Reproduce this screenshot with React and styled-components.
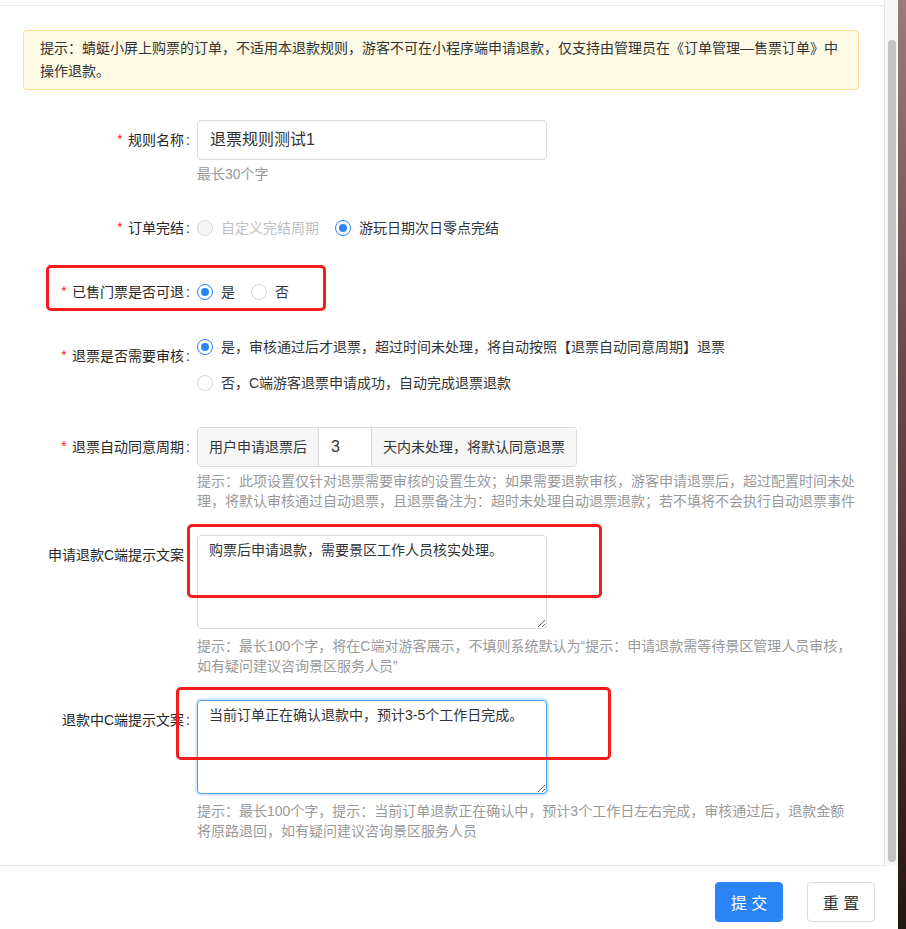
import React from 'react';
import styled, { createGlobalStyle, css } from 'styled-components';

const BLUE = '#2a84f6';

const GlobalStyle = createGlobalStyle`
  html, body {
    margin: 0;
    padding: 0;
    background: #ffffff;
  }
  body {
    font-family: "Liberation Sans", "Noto Sans CJK SC", sans-serif;
    font-size: 14px;
    color: #333333;
  }
  * {
    box-sizing: border-box;
  }
`;

const Page = styled.div`
  position: relative;
  display: flex;
  flex-direction: row;
  width: 906px;
  height: 929px;
  overflow: hidden;
`;

const Modal = styled.div`
  display: flex;
  flex-direction: column;
  width: 898px;
  height: 929px;
  background: #ffffff;
`;

const Wallpaper = styled.div`
  flex: 1;
  background: linear-gradient(180deg, #9a7c7e 0%, #6e4e4c 35%, #4a302c 70%, #241614 100%);
`;

const ScrollArea = styled.div`
  display: flex;
  flex-direction: row;
  height: 866px;
`;

const Content = styled.div`
  width: 884px;
  height: 866px;
  overflow: hidden;
  border-bottom: 1px solid #e6e6e6;
`;

const TopEdge = styled.div`
  height: 6px;
  border-bottom: 1px solid #e8e8e8;
`;

const Scrollbar = styled.div`
  width: 14px;
  background: #f7f7f7;
  border-left: 1px solid #e6e6e6;
  padding: 40px 0 4px 3px;
`;

const Thumb = styled.div`
  width: 8px;
  height: 822px;
  border-radius: 4px;
  background: #c2c2c2;
`;

const Body = styled.div`
  padding: 24px 25px 0 23px;
`;

const Alert = styled.div`
  padding: 6px 16px;
  border: 1px solid #f8e28e;
  border-radius: 4px;
  background: #fcfae4;
  color: #333333;
  font-size: 14px;
  line-height: 23px;
  margin-bottom: 30px;
`;

const FormItem = styled.div`
  display: grid;
  grid-template-columns: 174px 1fr;
  margin-bottom: 24px;
`;

const Label = styled.label`
  display: block;
  text-align: right;
  line-height: 40px;
  height: 40px;
  white-space: nowrap;
  color: #262626;
  font-size: 14px;

  &::after {
    content: ':';
    margin: 0 7px 0 2px;
  }
`;

const Required = styled.span`
  color: #f5222d;
  margin-right: 4px;
  font-family: "Liberation Mono", monospace;
  font-size: 14px;
`;

const Control = styled.div`
  display: flex;
  flex-direction: column;
  min-height: 40px;
`;

const TextInput = styled.div`
  width: 350px;
  height: 40px;
  padding: 0 12px;
  border: 1px solid #d9d9d9;
  border-radius: 4px;
  font-size: 16px;
  line-height: 38px;
  color: #333333;
`;

const Help = styled.div`
  margin-top: ${(p) => (p.$wide ? 7 : 4)}px;
  line-height: 20px;
  font-size: 14px;
  color: #999999;
`;

const RadioRow = styled.div`
  display: flex;
  align-items: center;
  height: 40px;
`;

const RadioStack = styled.div`
  display: flex;
  flex-direction: column;
  gap: 14px;
  padding-bottom: 9px;
`;

const RadioWrap = styled.span`
  display: inline-flex;
  align-items: center;
  height: 22px;
  margin-right: 8px;
  line-height: 22px;
  color: ${(p) => (p.$disabled ? '#c0c0c0' : '#333333')};
`;

const Circle = styled.span`
  position: relative;
  display: inline-block;
  width: 16px;
  height: 16px;
  border-radius: 50%;
  border: 1px solid #d9d9d9;
  background: #ffffff;
  flex-shrink: 0;

  ${(p) =>
    p.$checked &&
    css`
      border-color: ${BLUE};
      &::after {
        content: '';
        position: absolute;
        left: 3px;
        top: 3px;
        width: 8px;
        height: 8px;
        border-radius: 50%;
        background: ${BLUE};
      }
    `}

  ${(p) =>
    p.$disabled &&
    css`
      background: #f5f5f5;
      border-color: #d9d9d9;
    `}
`;

const RadioText = styled.span`
  padding: 0 8px;
  white-space: nowrap;
`;

const InputGroup = styled.div`
  display: flex;
  height: 40px;
  align-self: flex-start;
  border: 1px solid #d9d9d9;
  border-radius: 4px;
  overflow: hidden;
  line-height: 38px;
  color: #333333;
`;

const Addon = styled.span`
  padding: 0 11px;
  background: #f6f6f6;
  white-space: nowrap;
  & + & {
    border-left: 1px solid #d9d9d9;
  }
`;

const GroupInput = styled.span`
  width: 54px;
  padding: 0 12px;
  border-left: 1px solid #d9d9d9;
  border-right: 1px solid #d9d9d9;
  background: #ffffff;
  font-size: 16px;
`;

const TextArea = styled.textarea`
  display: block;
  width: 350px;
  height: 94px;
  margin: 0;
  padding: 3px 11px;
  border: 1px solid ${(p) => (p.$focused ? '#4d9ef8' : '#d9d9d9')};
  border-radius: 4px;
  font-family: inherit;
  font-size: 14px;
  line-height: 22px;
  color: #333333;
  resize: vertical;
  outline: none;
  box-shadow: ${(p) => (p.$focused ? '0 0 0 2px rgba(42, 132, 246, 0.18)' : 'none')};
`;

const Footer = styled.div`
  display: flex;
  justify-content: flex-end;
  gap: 24px;
  padding: 16px 23px 0 0;
  flex: 1;
`;

const Button = styled.button`
  width: 68px;
  height: 40px;
  border-radius: 4px;
  font-family: inherit;
  font-size: 16px;
  white-space: pre;
  padding: 0;
  cursor: pointer;
  border: 1px solid ${(p) => (p.$primary ? BLUE : '#d9d9d9')};
  background: ${(p) => (p.$primary ? BLUE : '#ffffff')};
  color: ${(p) => (p.$primary ? '#ffffff' : '#333333')};
`;

const Annotation = styled.div`
  position: absolute;
  left: ${(p) => p.$x}px;
  top: ${(p) => p.$y}px;
  width: ${(p) => p.$w}px;
  height: ${(p) => p.$h}px;
  border: 3px solid #f41c1c;
  border-radius: 5px;
  pointer-events: none;
`;

const Radio = ({ checked, disabled, children }) => (
  <RadioWrap $disabled={disabled}>
    <Circle $checked={checked} $disabled={disabled} />
    <RadioText>{children}</RadioText>
  </RadioWrap>
);

const Field = ({ label, required, children }) => (
  <FormItem>
    <Label>
      {required && <Required>*</Required>}
      {label}
    </Label>
    <Control>{children}</Control>
  </FormItem>
);

export default function App() {
  return (
    <>
      <GlobalStyle />
      <Page>
        <Modal>
          <ScrollArea>
            <Content>
              <TopEdge />
              <Body>
                <Alert>
                  提示：蜻蜓小屏上购票的订单，不适用本退款规则，游客不可在小程序端申请退款，仅支持由管理员在《订单管理—售票订单》中操作退款。
                </Alert>

                <Field label="规则名称" required>
                  <TextInput>退票规则测试1</TextInput>
                  <Help>最长30个字</Help>
                </Field>

                <Field label="订单完结" required>
                  <RadioRow>
                    <Radio disabled>自定义完结周期</Radio>
                    <Radio checked>游玩日期次日零点完结</Radio>
                  </RadioRow>
                </Field>

                <Field label="已售门票是否可退" required>
                  <RadioRow>
                    <Radio checked>是</Radio>
                    <Radio>否</Radio>
                  </RadioRow>
                </Field>

                <Field label="退票是否需要审核" required>
                  <RadioStack>
                    <Radio checked>是，审核通过后才退票，超过时间未处理，将自动按照【退票自动同意周期】退票</Radio>
                    <Radio>否，C端游客退票申请成功，自动完成退票退款</Radio>
                  </RadioStack>
                </Field>

                <Field label="退票自动同意周期" required>
                  <InputGroup>
                    <Addon>用户申请退票后</Addon>
                    <GroupInput>3</GroupInput>
                    <Addon>天内未处理，将默认同意退票</Addon>
                  </InputGroup>
                  <Help>
                    提示：此项设置仅针对退票需要审核的设置生效；如果需要退款审核，游客申请退票后，超过配置时间未处理，将默认审核通过自动退票，且退票备注为：超时未处理自动退票退款；若不填将不会执行自动退票事件
                  </Help>
                </Field>

                <Field label="申请退款C端提示文案">
                  <TextArea readOnly defaultValue="购票后申请退款，需要景区工作人员核实处理。" />
                  <Help $wide>
                    提示：最长100个字，将在C端对游客展示，不填则系统默认为“提示：申请退款需等待景区管理人员审核，
                    <br />
                    如有疑问建议咨询景区服务人员”
                  </Help>
                </Field>

                <Field label="退款中C端提示文案">
                  <TextArea $focused readOnly defaultValue="当前订单正在确认退款中，预计3-5个工作日完成。" />
                  <Help $wide>
                    提示：最长100个字，提示：当前订单退款正在确认中，预计3个工作日左右完成，审核通过后，退款金额
                    <br />
                    将原路退回，如有疑问建议咨询景区服务人员
                  </Help>
                </Field>
              </Body>
            </Content>
            <Scrollbar>
              <Thumb />
            </Scrollbar>
          </ScrollArea>
          <Footer>
            <Button $primary>提 交</Button>
            <Button>重 置</Button>
          </Footer>
        </Modal>
        <Wallpaper />

        <Annotation $x={46} $y={265} $w={280} $h={46} />
        <Annotation $x={187} $y={524} $w={415} $h={74} />
        <Annotation $x={176} $y={687} $w={435} $h={73} />
      </Page>
    </>
  );
}
